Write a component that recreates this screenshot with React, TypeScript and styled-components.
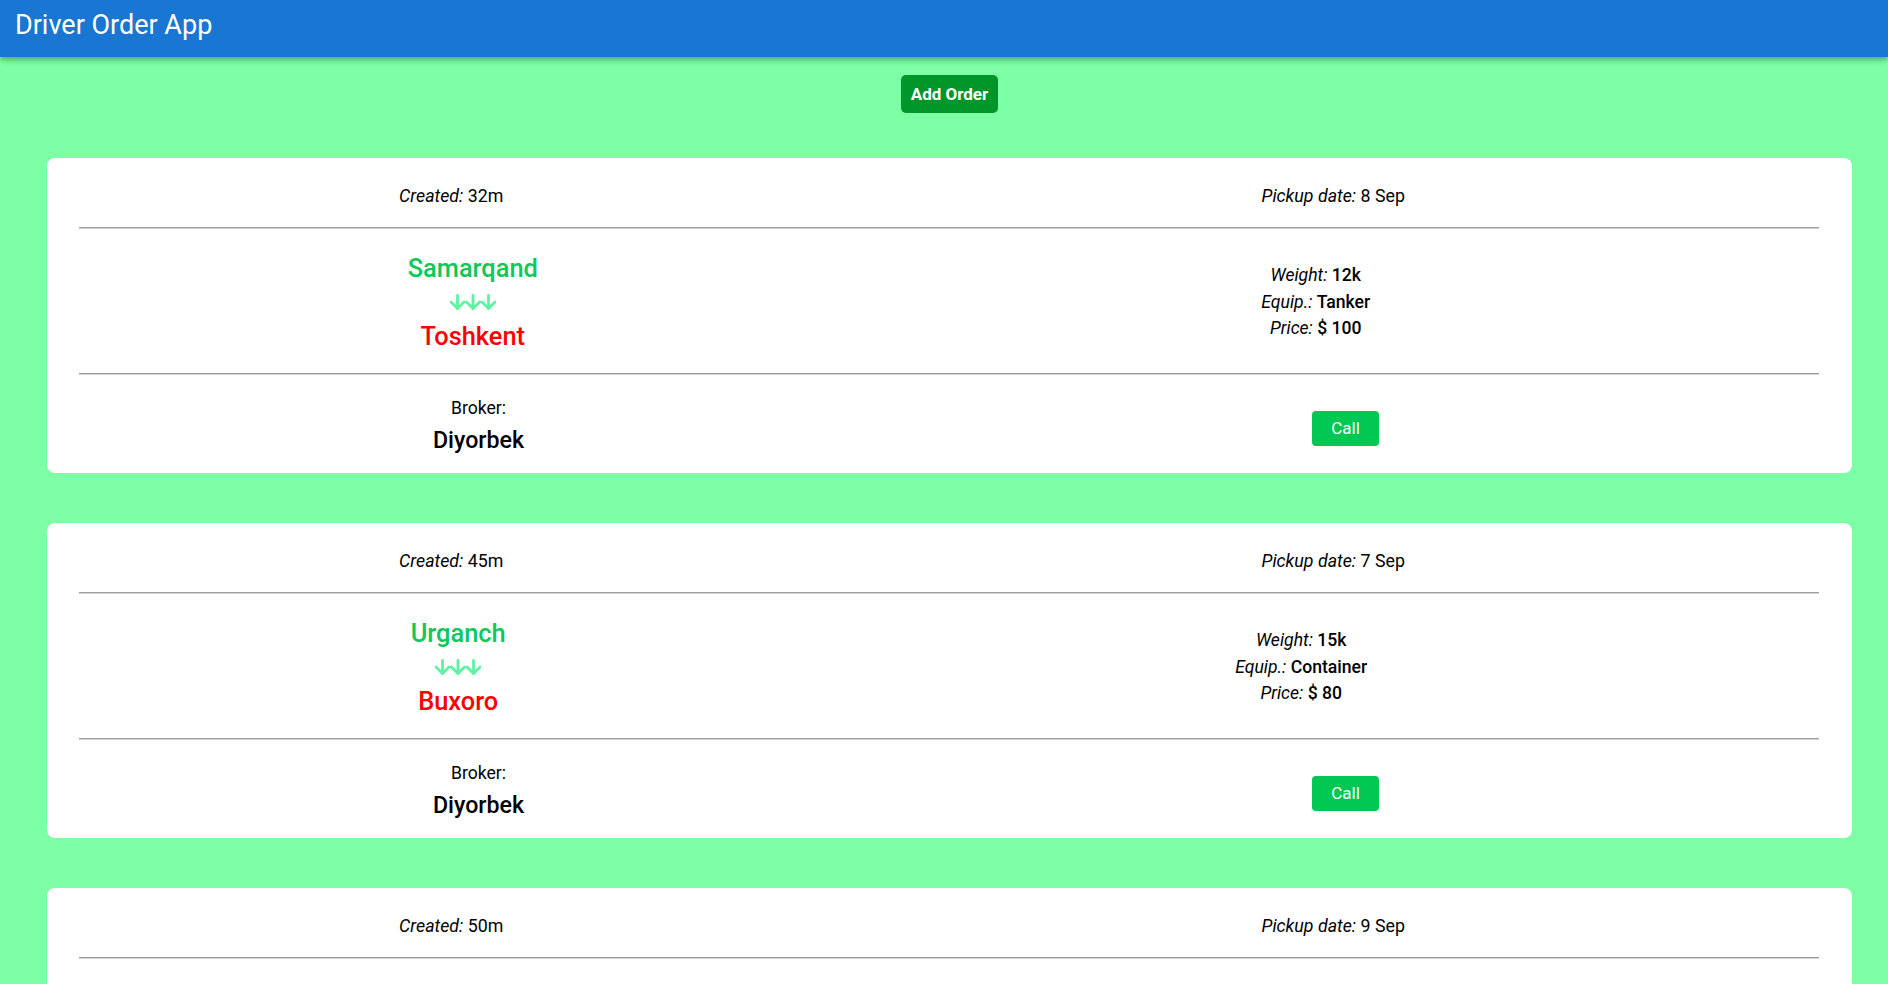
import React from "react";
import styled, { createGlobalStyle } from "styled-components";

const GlobalStyle = createGlobalStyle`
  html, body {
    margin: 0;
    padding: 0;
    background: #7cffa5;
  }
  body {
    font-family: Roboto, "Liberation Sans", sans-serif;
    color: #000;
  }
  * {
    box-sizing: border-box;
  }
`;

type Order = {
  id: number;
  created: string;
  pickup: string;
  from: string;
  to: string;
  weight: string;
  equip: string;
  price: string;
  broker: string;
};

const orders: Order[] = [
  { id: 1, created: "32m", pickup: "8 Sep", from: "Samarqand", to: "Toshkent", weight: "12k", equip: "Tanker", price: "$ 100", broker: "Diyorbek" },
  { id: 2, created: "45m", pickup: "7 Sep", from: "Urganch", to: "Buxoro", weight: "15k", equip: "Container", price: "$ 80", broker: "Diyorbek" },
  { id: 3, created: "50m", pickup: "9 Sep", from: "Buxoro", to: "Samarqand", weight: "10k", equip: "Reefer", price: "$ 90", broker: "Diyorbek" },
];

function Arrows() {
  return (
    <ArrowBox>
      <svg width="46" height="16" viewBox="0 0 46 16" fill="none" stroke="#5ef2a2" strokeWidth="2.8" strokeLinecap="round" strokeLinejoin="round">
        {[7.5, 23, 38.5].map((x) => (
          <g key={x}>
            <path d={`M${x} 1.5v13`} />
            <path d={`M${x - 6.5} 8l6.5 6.5 6.5-6.5`} />
          </g>
        ))}
      </svg>
    </ArrowBox>
  );
}

function OrderCard({ order }: { order: Order }) {
  return (
    <Card>
      <Row $h={69} $pt={7} $ml={-59} $mr={35}>
        <Meta>
          <Label>Created:</Label> {order.created}
        </Meta>
        <Meta>
          <Label>Pickup date:</Label> {order.pickup}
        </Meta>
      </Row>
      <Divider />
      <Row $h={144} $pt={2} $ml={-33} $mr={87}>
        <Route>
          <City $color="#0ec85a">{order.from}</City>
          <Arrows />
          <City $color="#ff0000">{order.to}</City>
        </Route>
        <Info>
          <div>
            <Label>Weight:</Label> <Value>{order.weight}</Value>
          </div>
          <div>
            <Label>Equip.:</Label> <Value>{order.equip}</Value>
          </div>
          <div>
            <Label>Price:</Label> <Value>{order.price}</Value>
          </div>
        </Info>
      </Row>
      <Divider />
      <Row $h={98} $pt={6} $ml={-40} $mr={46}>
        <Broker>
          <BrokerLabel>Broker:</BrokerLabel>
          <BrokerName>{order.broker}</BrokerName>
        </Broker>
        <CallButton>Call</CallButton>
      </Row>
    </Card>
  );
}

export default function App() {
  return (
    <>
      <GlobalStyle />
      <Header>
        <Title>Driver Order App</Title>
      </Header>
      <Main>
        <Toolbar>
          <AddButton>Add Order</AddButton>
        </Toolbar>
        <List>
          {orders.map((o) => (
            <OrderCard key={o.id} order={o} />
          ))}
        </List>
      </Main>
    </>
  );
}

const Header = styled.header`
  height: 57px;
  padding: 9px 15px 0;
  background: #1976d2;
  box-shadow: 0 2px 4px -1px rgba(0, 0, 0, 0.2), 0 4px 5px 0 rgba(0, 0, 0, 0.14),
    0 1px 10px 0 rgba(0, 0, 0, 0.12);
  position: relative;
  z-index: 1;
`;

const Title = styled.h1`
  margin: 0;
  color: #fff;
  font-size: 27px;
  font-weight: 400;
  line-height: normal;
`;

const Main = styled.main`
  padding: 18px 36px 40px 47px;
`;

const Toolbar = styled.div`
  display: flex;
  justify-content: center;
`;

const AddButton = styled.button`
  height: 38px;
  padding: 0 10px;
  border: none;
  border-radius: 5px;
  background: #00962a;
  color: #fff;
  font-family: Roboto, "Liberation Sans", sans-serif;
  font-size: 17px;
  font-weight: 700;
  cursor: pointer;
`;

const List = styled.div`
  margin-top: 45px;
  display: flex;
  flex-direction: column;
  gap: 50px;
`;

const Card = styled.section`
  background: #fff;
  border-radius: 8px;
  padding: 0 33px 0 32px;
`;

const Row = styled.div<{ $h: number; $pt: number; $ml: number; $mr: number }>`
  display: flex;
  justify-content: space-around;
  align-items: center;
  height: ${(p) => p.$h}px;
  padding-top: ${(p) => p.$pt}px;
  margin-left: ${(p) => p.$ml}px;
  margin-right: ${(p) => p.$mr}px;
`;

const Divider = styled.hr`
  margin: 0;
  height: 0;
  border: none;
  border-top: 1px solid #9e9e9e;
  border-bottom: 1px solid #d4d4d4;
`;

const Meta = styled.div`
  font-size: 17.8px;
  line-height: 26px;
  white-space: nowrap;
`;

const Label = styled.em`
  font-style: italic;
`;

const Value = styled.span`
  font-weight: 500;
`;

const Route = styled.div`
  display: flex;
  flex-direction: column;
  align-items: center;
`;

const City = styled.div<{ $color: string }>`
  font-size: 25.4px;
  font-weight: 500;
  line-height: 32px;
  color: ${(p) => p.$color};
`;

const ArrowBox = styled.div`
  height: 36px;
  display: flex;
  align-items: center;
  justify-content: center;
`;

const Info = styled.div`
  font-size: 17.6px;
  line-height: 26.5px;
  text-align: center;
  white-space: nowrap;
`;

const Broker = styled.div`
  text-align: center;
`;

const BrokerLabel = styled.div`
  font-size: 17.6px;
  line-height: 25.5px;
`;

const BrokerName = styled.div`
  font-size: 23.2px;
  font-weight: 500;
  line-height: 36px;
`;

const CallButton = styled.button`
  width: 67px;
  height: 35px;
  margin-top: 2px;
  border: none;
  border-radius: 4px;
  background: #00c853;
  color: #fff;
  font-family: Roboto, "Liberation Sans", sans-serif;
  font-size: 17px;
  cursor: pointer;
`;
